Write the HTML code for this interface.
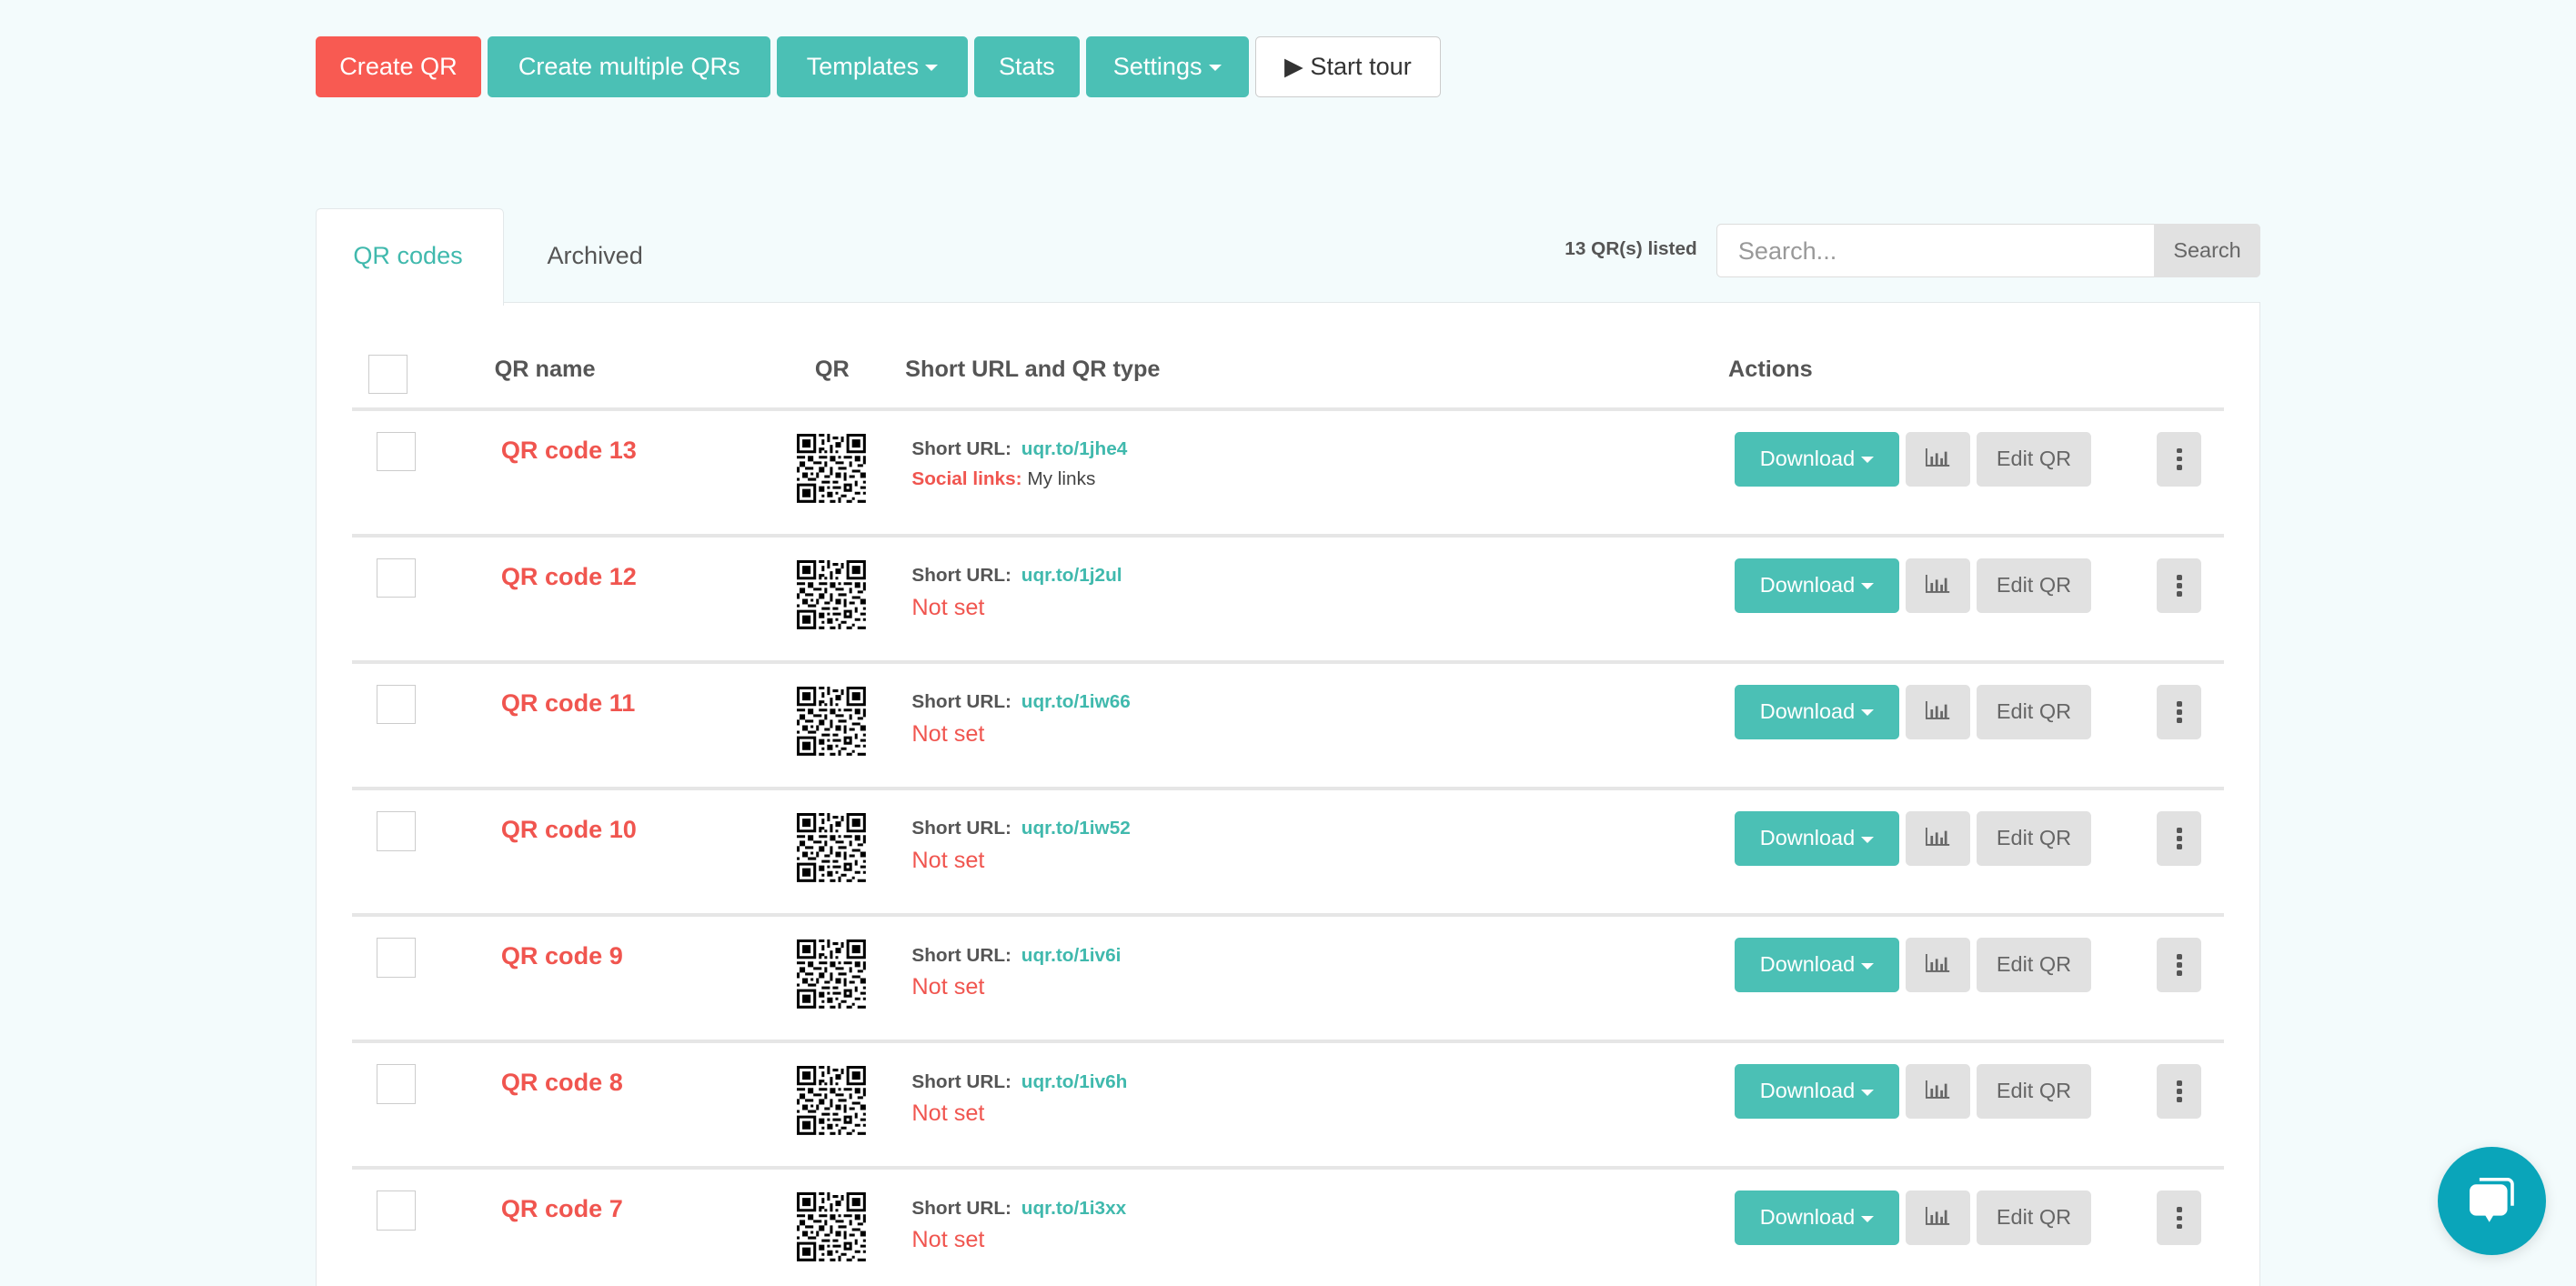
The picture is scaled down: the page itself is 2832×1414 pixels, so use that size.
<!DOCTYPE html>
<html><head><meta charset="utf-8"><style>
html,body{margin:0;padding:0;background:#f3fbfc;width:2832px;height:1414px;overflow:hidden}
*{white-space:nowrap}
#w{zoom:1.80612;width:1568px;height:783px;position:relative;font-family:"Liberation Sans",sans-serif}
.a{position:absolute;box-sizing:border-box}
.btn{position:absolute;top:22px;height:37px;border-radius:3px;color:#fff;font-size:15px;line-height:37px;text-align:center;background:#4bc0b5;box-sizing:border-box}
.car{display:inline-block;width:0;height:0;border-left:4px solid transparent;border-right:4px solid transparent;border-top:4px solid currentColor;vertical-align:middle;margin-left:4px}
.cb{position:absolute;width:24px;height:24px;border:1px solid #ccc;background:#fff;box-sizing:border-box}
.hd{position:absolute;top:217px;font-size:14px;font-weight:bold;color:#555}
.nm{position:absolute;left:305px;font-size:15px;font-weight:bold;color:#f0554f}
.su{position:absolute;left:555px;font-size:11.5px;font-weight:bold;color:#555}
.su b{color:#40b9ad;margin-left:6px}
.ns{position:absolute;left:555px;font-size:14px;color:#f0554f}
.dl{position:absolute;left:1056px;width:100px;height:33px;background:#4bc0b5;border-radius:3px;color:#fff;font-size:13px;line-height:33px;text-align:center}
.st{position:absolute;left:1160px;width:39px;height:33px;background:#e1e1e1;border-radius:3px}
.ed{position:absolute;left:1203px;width:70px;height:33px;background:#e1e1e1;border-radius:3px;color:#666;font-size:13px;line-height:33px;text-align:center}
.dt{position:absolute;left:1313px;width:27px;height:33px;background:#e1e1e1;border-radius:3px}
.dt i{position:absolute;left:12px;width:3px;height:3px;background:#555;border-radius:1px}
.ln{position:absolute;left:214px;width:1140px;height:2px;background:#e6e6e6}
.qr{position:absolute;left:485px;width:42px;height:42px}
</style></head><body><div id="w">
<svg width="0" height="0" style="position:absolute"><defs><g id="q"><path fill="#000" d="M0 0h7v7h-7zM1 1v5h5v-5zM2 2h3v3h-3zM18 0h7v7h-7zM19 1v5h5v-5zM20 2h3v3h-3zM0 18h7v7h-7zM1 19v5h5v-5zM2 20h3v3h-3z"/><path fill="#000" d="M8 0h2v1h-2zM11 0h1v3h-1zM13 1h2v1h-2zM9 2h1v2h-1zM14 3h2v2h-2zM8 5h2v1h-2zM12 4h1v3h-1zM16 1h1v2h-1zM8 6h1v1h-1zM10 6h1v1h-1zM14 6h1v1h-1zM0 8h3v1h-3zM4 8h2v2h-2zM8 8h3v1h-3zM12 8h2v2h-2zM15 8h1v1h-1zM17 8h3v1h-3zM21 8h2v2h-2zM24 8h1v3h-1zM1 10h2v2h-2zM6 10h3v1h-3zM10 10h1v2h-1zM14 10h3v1h-3zM19 10h1v2h-1zM22 11h2v1h-2zM0 12h1v2h-1zM3 12h3v1h-3zM8 12h2v2h-2zM12 12h1v3h-1zM15 12h3v1h-3zM20 13h3v1h-3zM2 14h2v2h-2zM5 14h1v1h-1zM7 14h1v2h-1zM10 15h2v1h-2zM14 14h2v2h-2zM17 14h1v3h-1zM19 15h2v1h-2zM23 14h2v2h-2zM0 16h1v1h-1zM4 16h3v1h-3zM9 17h3v1h-3zM13 17h2v1h-2zM21 17h1v2h-1zM24 17h1v1h-1zM8 19h2v2h-2zM11 19h1v1h-1zM13 19h3v1h-3zM17 18h3v3h-3zM18 19v1h1v-1zM23 19h2v1h-2zM9 22h1v1h-1zM11 21h2v2h-2zM14 21h1v1h-1zM16 22h2v1h-2zM21 21h2v1h-2zM24 21h1v1h-1zM8 24h2v1h-2zM12 24h2v1h-2zM15 23h1v2h-1zM18 24h2v1h-2zM20 23h1v1h-1zM22 24h3v1h-3z"/></g>
<g id="bar"><path d="M0.5 0v10.5h14" stroke="#666" stroke-width="1" fill="none"/><path fill="#666" d="M3 5h1.5v5h-1.5zM6 3h1.5v7h-1.5zM9 6h1.5v4h-1.5zM11.5 2h1.5v8h-1.5z"/></g></defs></svg>

<div class="btn" style="left:192px;width:101px;background:#f85a52">Create QR</div>
<div class="btn" style="left:297px;width:172px">Create multiple QRs</div>
<div class="btn" style="left:473px;width:116px">Templates<span class="car"></span></div>
<div class="btn" style="left:593px;width:64px">Stats</div>
<div class="btn" style="left:661px;width:99px">Settings<span class="car"></span></div>
<div class="btn" style="left:764px;width:113px;background:#fff;border:1px solid #ccc;color:#333;line-height:35px">&#9654; Start tour</div>

<div class="a" style="left:192px;top:184px;width:1184px;height:620px;background:#fff;border:1px solid #e3e8ea"></div>
<div class="a" style="left:192px;top:127px;width:115px;height:59px;background:#fff;border:1px solid #e3e8ea;border-bottom:none;border-radius:3px 3px 0 0"></div>
<div class="a" style="left:215px;top:147px;font-size:15px;color:#40b9ad">QR codes</div>
<div class="a" style="left:333px;top:147px;font-size:15px;color:#555">Archived</div>
<div class="a" style="left:900px;width:133px;top:145px;font-size:11.5px;font-weight:bold;color:#555;text-align:right">13 QR(s) listed</div>
<div class="a" style="left:1045px;top:136px;width:331px;height:33px;background:#fff;border:1px solid #ddd;border-radius:3px"></div>
<div class="a" style="left:1311px;top:136px;width:65px;height:33px;background:#e1e1e1;border-radius:0 3px 3px 0;color:#666;font-size:13px;line-height:33px;text-align:center">Search</div>
<div class="a" style="left:1058px;top:144px;font-size:15px;color:#999">Search...</div>

<div class="cb" style="left:224px;top:216px"></div>
<div class="hd" style="left:301px">QR name</div>
<div class="hd" style="left:496px">QR</div>
<div class="hd" style="left:551px">Short URL and QR type</div>
<div class="hd" style="left:1052px">Actions</div>
<div class="ln" style="top:248px"></div>

<div style="position:absolute;left:0;top:0">
<div class="cb" style="left:229px;top:263px"></div><div class="nm" style="top:265px">QR code 13</div>
<svg class="qr" style="top:264px" viewBox="0 0 25 25"><use href="#q"/></svg>
<div class="su" style="top:267px">Short URL:<b>uqr.to/1jhe4</b></div>
<div class="a" style="left:555px;top:285px;font-size:11.5px;color:#444"><b style="color:#f0554f">Social links:</b> My links</div>
<div class="dl" style="top:263px">Download<span class="car"></span></div>
<div class="st" style="top:263px"></div><div class="ed" style="top:263px">Edit QR</div>
<div class="dt" style="top:263px"><i style="top:10px"></i><i style="top:15px"></i><i style="top:20px"></i></div>
<div class="ln" style="top:325px"></div>
</div>
<div style="position:absolute;left:0;top:77px">
<div class="cb" style="left:229px;top:263px"></div><div class="nm" style="top:265px">QR code 12</div>
<svg class="qr" style="top:264px" viewBox="0 0 25 25"><use href="#q"/></svg>
<div class="su" style="top:267px">Short URL:<b>uqr.to/1j2ul</b></div><div class="ns" style="top:285px">Not set</div>
<div class="dl" style="top:263px">Download<span class="car"></span></div>
<div class="st" style="top:263px"></div><div class="ed" style="top:263px">Edit QR</div>
<div class="dt" style="top:263px"><i style="top:10px"></i><i style="top:15px"></i><i style="top:20px"></i></div>
<div class="ln" style="top:325px"></div>
</div>
<div style="position:absolute;left:0;top:154px">
<div class="cb" style="left:229px;top:263px"></div><div class="nm" style="top:265px">QR code 11</div>
<svg class="qr" style="top:264px" viewBox="0 0 25 25"><use href="#q"/></svg>
<div class="su" style="top:267px">Short URL:<b>uqr.to/1iw66</b></div><div class="ns" style="top:285px">Not set</div>
<div class="dl" style="top:263px">Download<span class="car"></span></div>
<div class="st" style="top:263px"></div><div class="ed" style="top:263px">Edit QR</div>
<div class="dt" style="top:263px"><i style="top:10px"></i><i style="top:15px"></i><i style="top:20px"></i></div>
<div class="ln" style="top:325px"></div>
</div>
<div style="position:absolute;left:0;top:231px">
<div class="cb" style="left:229px;top:263px"></div><div class="nm" style="top:265px">QR code 10</div>
<svg class="qr" style="top:264px" viewBox="0 0 25 25"><use href="#q"/></svg>
<div class="su" style="top:267px">Short URL:<b>uqr.to/1iw52</b></div><div class="ns" style="top:285px">Not set</div>
<div class="dl" style="top:263px">Download<span class="car"></span></div>
<div class="st" style="top:263px"></div><div class="ed" style="top:263px">Edit QR</div>
<div class="dt" style="top:263px"><i style="top:10px"></i><i style="top:15px"></i><i style="top:20px"></i></div>
<div class="ln" style="top:325px"></div>
</div>
<div style="position:absolute;left:0;top:308px">
<div class="cb" style="left:229px;top:263px"></div><div class="nm" style="top:265px">QR code 9</div>
<svg class="qr" style="top:264px" viewBox="0 0 25 25"><use href="#q"/></svg>
<div class="su" style="top:267px">Short URL:<b>uqr.to/1iv6i</b></div><div class="ns" style="top:285px">Not set</div>
<div class="dl" style="top:263px">Download<span class="car"></span></div>
<div class="st" style="top:263px"></div><div class="ed" style="top:263px">Edit QR</div>
<div class="dt" style="top:263px"><i style="top:10px"></i><i style="top:15px"></i><i style="top:20px"></i></div>
<div class="ln" style="top:325px"></div>
</div>
<div style="position:absolute;left:0;top:385px">
<div class="cb" style="left:229px;top:263px"></div><div class="nm" style="top:265px">QR code 8</div>
<svg class="qr" style="top:264px" viewBox="0 0 25 25"><use href="#q"/></svg>
<div class="su" style="top:267px">Short URL:<b>uqr.to/1iv6h</b></div><div class="ns" style="top:285px">Not set</div>
<div class="dl" style="top:263px">Download<span class="car"></span></div>
<div class="st" style="top:263px"></div><div class="ed" style="top:263px">Edit QR</div>
<div class="dt" style="top:263px"><i style="top:10px"></i><i style="top:15px"></i><i style="top:20px"></i></div>
<div class="ln" style="top:325px"></div>
</div>
<div style="position:absolute;left:0;top:462px">
<div class="cb" style="left:229px;top:263px"></div><div class="nm" style="top:265px">QR code 7</div>
<svg class="qr" style="top:264px" viewBox="0 0 25 25"><use href="#q"/></svg>
<div class="su" style="top:267px">Short URL:<b>uqr.to/1i3xx</b></div><div class="ns" style="top:285px">Not set</div>
<div class="dl" style="top:263px">Download<span class="car"></span></div>
<div class="st" style="top:263px"></div><div class="ed" style="top:263px">Edit QR</div>
<div class="dt" style="top:263px"><i style="top:10px"></i><i style="top:15px"></i><i style="top:20px"></i></div>
</div>

<svg class="a" style="left:1172px;top:273px" width="15" height="12"><use href="#bar"/></svg>
<svg class="a" style="left:1172px;top:350px" width="15" height="12"><use href="#bar"/></svg>
<svg class="a" style="left:1172px;top:427px" width="15" height="12"><use href="#bar"/></svg>
<svg class="a" style="left:1172px;top:504px" width="15" height="12"><use href="#bar"/></svg>
<svg class="a" style="left:1172px;top:581px" width="15" height="12"><use href="#bar"/></svg>
<svg class="a" style="left:1172px;top:658px" width="15" height="12"><use href="#bar"/></svg>
<svg class="a" style="left:1172px;top:735px" width="15" height="12"><use href="#bar"/></svg>

<div class="a" style="left:1484px;top:698px;width:66px;height:66px;border-radius:50%;background:#0aa5ba;box-shadow:0 2px 8px rgba(0,0,0,.12)"></div>
<svg class="a" style="left:1498px;top:712px" width="38" height="38" viewBox="0 0 38 38"><path d="M11 6h17a3 3 0 0 1 3 3v13" stroke="#fff" stroke-width="2" fill="none"/><rect x="5" y="9" width="23" height="19" rx="4" fill="#fff"/><path d="M14 27l3 5 3-5z" fill="#fff"/></svg>
</div></body></html>
